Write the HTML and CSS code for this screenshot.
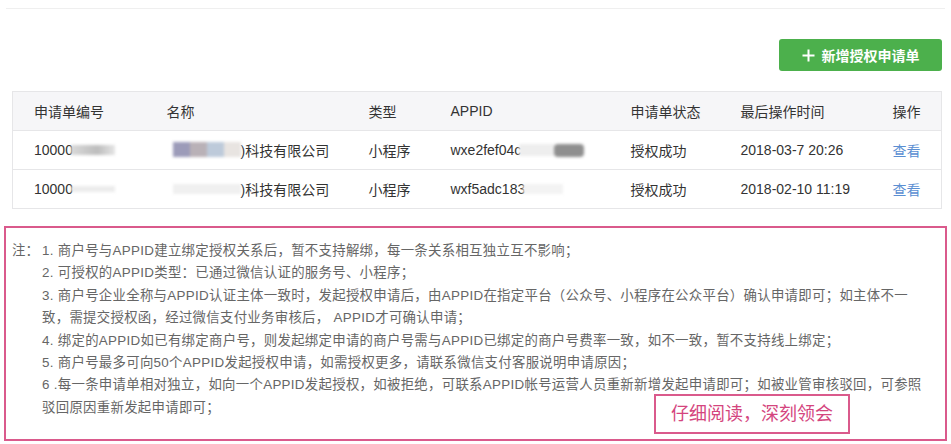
FILE: index.html
```html
<!DOCTYPE html>
<html lang="zh-CN">
<head>
<meta charset="utf-8">
<title>授权申请单</title>
<link rel="stylesheet" href="styles.css">
</head>
<body>
<div class="page">
  <div class="topline"></div>
  <div class="toolbar">
    <button class="btn-add" type="button">
      <svg class="plus" width="13" height="13" viewBox="0 0 13 13"><path d="M6.5 0.5v12M0.5 6.5h12" stroke="#fff" stroke-width="2" fill="none"/></svg>
      <span>新增授权申请单</span>
    </button>
  </div>

  <table class="grid">
    <colgroup>
      <col class="c1"><col class="c2"><col class="c3"><col class="c4"><col class="c5"><col class="c6"><col class="c7">
    </colgroup>
    <thead>
      <tr><th>申请单编号</th><th>名称</th><th>类型</th><th>APPID</th><th>申请单状态</th><th>最后操作时间</th><th>操作</th></tr>
    </thead>
    <tbody>
      <tr>
        <td><span class="mask-wrap">10000<span class="blur b-num1"></span></span></td>
        <td><span class="mask-wrap"><span class="blur b-name1"><i class="s1"></i><i class="s2"></i><i class="s3"></i><i class="s4"></i></span>)科技有限公司</span></td>
        <td>小程序</td>
        <td><span class="mask-wrap">wxe2fef04c<span class="blur b-app1"><i class="l"></i><i class="d"></i></span></span></td>
        <td>授权成功</td>
        <td>2018-03-7 20:26</td>
        <td><a class="link" href="#">查看</a></td>
      </tr>
      <tr>
        <td><span class="mask-wrap">10000<span class="blur b-num2"></span></span></td>
        <td><span class="mask-wrap"><span class="blur b-name2"></span>)科技有限公司</span></td>
        <td>小程序</td>
        <td><span class="mask-wrap">wxf5adc183<span class="blur b-app2"></span></span></td>
        <td>授权成功</td>
        <td>2018-02-10 11:19</td>
        <td><a class="link" href="#">查看</a></td>
      </tr>
    </tbody>
  </table>

  <div class="note">
    <div class="note-label">注：</div>
    <div class="note-body">
      <p>1. 商户号与APPID建立绑定授权关系后，暂不支持解绑，每一条关系相互独立互不影响；</p>
      <p>2. 可授权的APPID类型：已通过微信认证的服务号、小程序；</p>
      <p>3. 商户号企业全称与APPID认证主体一致时，发起授权申请后，由APPID在指定平台（公众号、小程序在公众平台）确认申请即可；如主体不一<br>致，需提交授权函，经过微信支付业务审核后， APPID才可确认申请；</p>
      <p>4. 绑定的APPID如已有绑定商户号，则发起绑定申请的商户号需与APPID已绑定的商户号费率一致，如不一致，暂不支持线上绑定；</p>
      <p>5. 商户号最多可向50个APPID发起授权申请，如需授权更多，请联系微信支付客服说明申请原因；</p>
      <p>6 .每一条申请单相对独立，如向一个APPID发起授权，如被拒绝，可联系APPID帐号运营人员重新新增发起申请即可；如被业管审核驳回，可参照<br>驳回原因重新发起申请即可；</p>
    </div>
    <div class="callout">仔细阅读，深刻领会</div>
  </div>
</div>
</body>
</html>
```

FILE: styles.css
```css
html, body {
  margin: 0;
  padding: 0;
  background: #fff;
}
body {
  font-family: "Liberation Sans", "Noto Sans CJK SC", sans-serif;
  color: #333;
}
.page {
  width: 951px;
  height: 444px;
  overflow: hidden;
}
.topline {
  margin: 8px 6px 0;
  border-top: 1px solid #efefef;
}
.toolbar {
  display: flex;
  justify-content: flex-end;
  padding-right: 9px;
  margin-top: 30px;
}
.btn-add {
  display: flex;
  align-items: center;
  justify-content: center;
  gap: 7px;
  width: 163px;
  height: 32px;
  padding: 0;
  border: none;
  border-radius: 3px;
  background: #4cb04c;
  color: #fff;
  font-family: "Liberation Sans", "Noto Sans CJK SC", sans-serif;
  font-size: 14px;
  font-weight: bold;
}
.btn-add .plus {
  display: block;
}
.grid {
  margin: 20px 0 0 12px;
  width: 929px;
  border-collapse: collapse;
  table-layout: fixed;
  border: 1px solid #e6e6e8;
  font-size: 14px;
}
.c1 { width: 133px; }
.c2 { width: 202px; }
.c3 { width: 82px; }
.c4 { width: 180px; }
.c5 { width: 110px; }
.c6 { width: 152px; }
.c7 { width: 70px; }
.grid th {
  height: 38px;
  background: #f6f6f8;
  font-weight: normal;
  text-align: left;
  padding: 0 0 0 21px;
  color: #333;
  border-bottom: 1px solid #e6e6e8;
}
.grid td {
  height: 38px;
  padding: 0 0 0 21px;
  border-bottom: 1px solid #e6e6e8;
  white-space: nowrap;
  color: #333;
}
.link {
  color: #5b8fd2;
  text-decoration: none;
}
.mask-wrap {
  position: relative;
  display: inline-flex;
  align-items: center;
}
.blur {
  display: inline-flex;
  filter: blur(1.5px);
}
.b-num1 {
  width: 44px;
  height: 10px;
  margin-left: -2px;
  background: linear-gradient(90deg, #d8d8d8 0%, #bdbdbd 60%, #e5e5e5 100%);
}
.b-num2 {
  width: 44px;
  height: 6px;
  margin-left: -2px;
  background: #ececec;
}
.b-name1 {
  height: 15px;
  margin-left: 6px;
}
.b-name1 i {
  display: block;
  width: 17px;
  height: 15px;
}
.b-name1 .s1 { background: #9c9bb9; }
.b-name1 .s2 { background: #b9b1b7; }
.b-name1 .s3 { background: #bdcada; }
.b-name1 .s4 { background: #e8e4e1; }
.b-name2 {
  width: 68px;
  height: 10px;
  margin-left: 6px;
  background: #f0f0f0;
}
.b-app1 {
  align-items: center;
  margin-left: -2px;
}
.b-app1 .l {
  display: block;
  width: 35px;
  height: 12px;
  background: #eeeeee;
}
.b-app1 .d {
  display: block;
  width: 30px;
  height: 13px;
  background: #8f8f8f;
  border-radius: 4px;
}
.b-app2 {
  width: 40px;
  height: 10px;
  margin-left: -2px;
  background: #f3f3f3;
}
.note {
  position: relative;
  display: flex;
  margin: 17px 4px 0;
  border: 2px solid #da5a8c;
  padding: 12px 0 0 6px;
  box-sizing: border-box;
  height: 215px;
  font-size: 13.4px;
  line-height: 22.4px;
  letter-spacing: 0.3px;
  color: #666;
}
.note-label {
  width: 30px;
  flex: none;
  letter-spacing: 0;
}
.note-body p {
  margin: 0;
  white-space: nowrap;
}
.callout {
  position: absolute;
  left: 648px;
  top: 166px;
  width: 196px;
  height: 40px;
  box-sizing: border-box;
  border: 2px solid #da5a8c;
  background: #fff;
  color: #d4457e;
  font-size: 18px;
  line-height: 36px;
  letter-spacing: 0;
  text-align: center;
}
```
